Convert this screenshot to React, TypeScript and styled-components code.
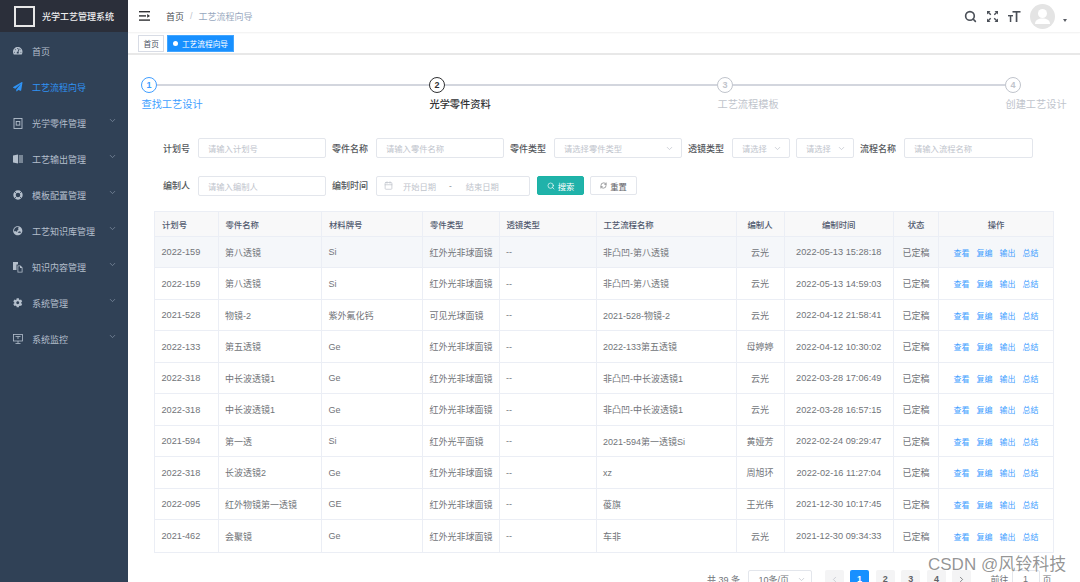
import React from "react";
import styled, { createGlobalStyle } from "styled-components";
import { FaTachometerAlt, FaPaperPlane, FaGlobeAsia, FaCog } from "react-icons/fa";
import { LuChevronDown, LuChevronLeft, LuChevronRight, LuSearch, LuRefreshCw, LuCalendar } from "react-icons/lu";

const Global = createGlobalStyle`
  html, body { margin: 0; padding: 0; height: 582px; overflow: hidden; background: #fff; }
  body { font-family: "Liberation Sans", "Noto Sans CJK SC", sans-serif; font-size: 9px; color: #606266; }
  * { box-sizing: border-box; }
`;

const Layout = styled.div`display: flex; width: 1080px; height: 582px; overflow: hidden; position: relative;`;
const Sidebar = styled.aside`width: 128px; flex: none; background: #304156; display: flex; flex-direction: column;`;
const Logo = styled.div`height: 32px; background: #2b2f3a; display: flex; align-items: center; padding-left: 14px; gap: 7px; color: #f0f0f0; font-size: 9px; font-weight: 500; white-space: nowrap;`;
const LogoBox = styled.div`width: 21px; height: 21px; border: 2px solid #e8e8e8; background: #2b2f3a;`;
const Menu = styled.nav`display: flex; flex-direction: column; padding-top: 1px;`;
const MenuItem = styled.div<{ $active?: boolean }>`
  height: 36px; display: flex; align-items: center; padding-left: 13px; position: relative;
  color: ${p => (p.$active ? "#2f93f5" : "#b4bfcc")}; font-size: 9px;
`;
const MenuIcon = styled.span`width: 19px; flex: none; display: flex; align-items: center; font-size: 9.5px;`;
const Caret = styled.span`position: absolute; right: 11px; top: 11px; display: flex; color: #7f8da0; font-size: 9px;`;

const Main = styled.main`flex: 1; min-width: 0; display: flex; flex-direction: column;`;
const Navbar = styled.header`height: 32px; flex: none; display: flex; align-items: center; padding: 0 13px 0 11px; box-shadow: 0 1px 2px rgba(0,21,41,.05);`;
const Crumb = styled.div`display: flex; align-items: center; margin-left: 16px; gap: 6px; font-size: 9px; color: #97a8be; flex: 1;`;
const CrumbHome = styled.span`color: #4a4d52;`;
const CrumbSep = styled.span`color: #c0c4cc;`;
const NavIcons = styled.div`display: flex; align-items: center; color: #4a4f57;`;
const NavIconSlot = styled.span`width: 22px; display: flex; align-items: center;`;
const Avatar = styled.div`width: 25px; height: 25px; border-radius: 50%; background: #e4e4e4; display: flex; align-items: center; justify-content: center; overflow: hidden;`;
const AvatarCaret = styled.span`width: 0; height: 0; border: 2.5px solid transparent; border-top: 3px solid #5a5e66; margin: 11px 0 0 8px;`;
const TagsBar = styled.div`height: 23px; flex: none; display: flex; align-items: center; gap: 3px; padding: 0 0 0 10px; border-bottom: 2px solid #e8e8e8; border-top: 1px solid #f4f4f4;`;
const Tag = styled.div<{ $active?: boolean }>`
  height: 17px; display: flex; align-items: center; padding: 0 4.5px; gap: 4px; font-size: 7.7px;
  border: 1px solid ${p => (p.$active ? "#42a5ff" : "#d8dce5")};
  background: ${p => (p.$active ? "#1890ff" : "#fff")};
  color: ${p => (p.$active ? "#fff" : "#495060")};
`;
const TagDot = styled.span`width: 5px; height: 5px; border-radius: 50%; background: #fff;`;

const Content = styled.section`flex: 1; min-height: 0; padding: 22px 26px 0 13px;`;
const Steps = styled.div`display: grid; grid-template-columns: 288px 288px 288px auto; height: 35px;`;
const Step = styled.div`display: flex; flex-direction: column; min-width: 0;`;
const StepHead = styled.div`display: flex; align-items: center; height: 16px;`;
const StepDot = styled.div<{ $s: string }>`
  width: 16px; height: 16px; border-radius: 50%; flex: none; display: flex; align-items: center; justify-content: center;
  font-size: 9px; font-weight: 700; background: #fff;
  border: 1.5px solid ${p => (p.$s === "done" ? "#409eff" : p.$s === "cur" ? "#303133" : "#c0c4cc")};
  color: ${p => (p.$s === "done" ? "#409eff" : p.$s === "cur" ? "#303133" : "#c0c4cc")};
`;
const StepLine = styled.div`flex: 1; height: 2px; background: #d3d6de;`;
const StepTitle = styled.div<{ $s: string }>`
  margin: 5px 0 0 0.5px; font-size: 10.2px; line-height: 14px; white-space: nowrap;
  font-weight: ${p => (p.$s === "cur" ? 500 : 400)};
  color: ${p => (p.$s === "done" ? "#409eff" : p.$s === "cur" ? "#303133" : "#c0c4cc")};
`;

const Form = styled.div`display: flex; flex-direction: column; gap: 17.5px; margin-top: 26px;`;
const FormRow = styled.div`display: flex; align-items: center; height: 20px;`;
const Label = styled.label<{ $w: number }>`width: ${p => p.$w}px; flex: none; text-align: right; padding-right: 8px; font-size: 9px; font-weight: 500; color: #54575c; white-space: nowrap;`;
const Field = styled.div<{ $w: number }>`
  width: ${p => p.$w}px; flex: none; height: 20px; border: 1px solid #e3e6ec; border-radius: 2px; display: flex; align-items: center;
  padding: 0 7px 0 9px; color: #c0c4cc; font-size: 8.3px; justify-content: space-between; white-space: nowrap; background: #fff;
`;
const DateSep = styled.span`color: #909399; margin-left: 3px;`;
const DateField = styled(Field)`justify-content: flex-start; padding-left: 7px;`;
const DateText = styled.span<{ $w: number }>`width: ${p => p.$w}px; flex: none; text-align: center;`;
const CalendarIcon = styled(LuCalendar)`flex: none;`;
const Btn = styled.button<{ $primary?: boolean }>`
  height: 19px; width: 47px; display: flex; align-items: center; justify-content: center; gap: 3px; border-radius: 2px; font: inherit; font-size: 8.3px; padding: 0;
  border: 1px solid ${p => (p.$primary ? "#1ab3a4" : "#e3e6ec")};
  background: ${p => (p.$primary ? "#20b2aa" : "#fff")};
  color: ${p => (p.$primary ? "#fff" : "#606266")};
`;
const Gap = styled.span<{ $w: number }>`width: ${p => p.$w}px; flex: none;`;

const cols = "63.5px 103.5px 101px 76.5px 97px 140px 48px 109.5px 45px 114px";
const Table = styled.div`margin: 15.5px 0 0 13px; width: 900px; border: 1px solid #ebeef5;`;
const Row = styled.div<{ $head?: boolean; $hi?: boolean }>`
  display: grid; grid-template-columns: ${cols}; height: ${p => (p.$head ? "24.5px" : "31.5px")};
  background: ${p => (p.$head ? "#f8f8f9" : p.$hi ? "#f5f7fa" : "#fff")};
  border-bottom: 1px solid #ebeef5;
  &:last-child { border-bottom: none; }
`;
const Cell = styled.div<{ $center?: boolean; $head?: boolean }>`
  display: flex; align-items: center; padding: ${p => (p.$head ? "0 7px" : "1px 6.5px 0")}; white-space: nowrap; overflow: hidden; border-right: 1px solid #ebeef5;
  justify-content: ${p => (p.$center ? "center" : "flex-start")};
  color: ${p => (p.$head ? "#515a6e" : "#717479")}; font-weight: ${p => (p.$head ? 500 : 400)};
  font-size: ${p => (p.$head ? "8.4px" : "9px")};
  &:last-child { border-right: none; }
`;
const Num = styled.span`font-size: 9.2px;`;
const Actions = styled.div`display: flex; gap: 7px; color: #409eff; font-size: 8px;`;

const Pager = styled.div`display: flex; align-items: center; margin-top: 17px; height: 19px; padding-left: 566px; white-space: nowrap; font-size: 9px; color: #717479;`;
const SizeSelect = styled.div`width: 64px; height: 19px; border: 1px solid #e3e6ec; border-radius: 2px; margin: 0 13px 0 7.5px; display: flex; align-items: center; justify-content: space-between; padding: 0 5px 0 10px;`;
const Pages = styled.div`display: flex; gap: 6.6px;`;
const PageBtn = styled.div<{ $active?: boolean; $disabled?: boolean }>`
  width: 19px; height: 19px; border-radius: 2px; display: flex; align-items: center; justify-content: center; font-weight: 700;
  background: ${p => (p.$active ? "#1890ff" : "#f4f4f5")};
  color: ${p => (p.$active ? "#fff" : p.$disabled ? "#c0c4cc" : "#606266")};
`;
const Goto = styled.div`display: flex; align-items: center; margin-left: 19px;`;
const GotoInput = styled.div`width: 28px; height: 19px; border: 1px solid #e3e6ec; border-radius: 2px; margin: 0 3px; display: flex; align-items: center; justify-content: center;`;
const Watermark = styled.div`position: absolute; left: 928px; top: 555px; font-size: 17px; line-height: 20px; color: rgba(70,70,70,.58); white-space: nowrap; text-shadow: 0 0 1px #fff;`;

const PartIcon = () => (
  <svg width="10" height="11" viewBox="0 0 10 11" fill="none" stroke="currentColor"><rect x="1" y=".5" width="8" height="10" strokeWidth=".9" /><rect x="3.2" y="3.5" width="3.6" height="3.6" strokeWidth=".9" /></svg>
);
const BookIcon = () => (
  <svg width="10" height="10" viewBox="0 0 10 10" fill="currentColor"><path d="M0 1.5 5 .5v9l-5-1z" /><path d="M5.8 1H10v8H5.8z" opacity=".55" /></svg>
);
const RingIcon = () => (
  <svg width="10" height="10" viewBox="0 0 10 10" fill="none" stroke="currentColor"><circle cx="5" cy="5" r="3.5" strokeWidth="2.4" /><path d="M1 1l2 2M9 1 7 3M1 9l2-2M9 9 7 7" stroke="#304156" strokeWidth=".8" /></svg>
);
const DocsIcon = () => (
  <svg width="10" height="11" viewBox="0 0 10 11" fill="currentColor"><path d="M0 0h5v2.5H3.5V8H0z" /><path d="M4.5 3.5h3L9.5 5.5v5h-5zM5.3 4.3v5.400h3.400V6H7V4.3z" /></svg>
);
const ScreenIcon = () => (
  <svg width="10" height="10" viewBox="0 0 10 10" fill="none" stroke="currentColor" strokeWidth=".8"><rect x=".5" y=".5" width="9" height="6.5" /><path d="M2.5 2.500h5M5 2.500V5M2.500 9.500h5M5 7v2.500" /></svg>
);

const menu: [React.ReactNode, string, boolean, boolean][] = [
  [<FaTachometerAlt />, "首页", false, false],
  [<FaPaperPlane />, "工艺流程向导", true, false],
  [<PartIcon />, "光学零件管理", false, true],
  [<BookIcon />, "工艺输出管理", false, true],
  [<RingIcon />, "模板配置管理", false, true],
  [<FaGlobeAsia />, "工艺知识库管理", false, true],
  [<DocsIcon />, "知识内容管理", false, true],
  [<FaCog />, "系统管理", false, true],
  [<ScreenIcon />, "系统监控", false, true],
];

const steps: [string, string][] = [["查找工艺设计", "done"], ["光学零件资料", "cur"], ["工艺流程模板", "wait"], ["创建工艺设计", "wait"]];
const heads = ["计划号", "零件名称", "材料牌号", "零件类型", "透镜类型", "工艺流程名称", "编制人", "编制时间", "状态", "操作"];
const rows = [
  ["2022-159", "第八透镜", "Si", "红外光非球面镜", "非凸凹-第八透镜", "云光", "2022-05-13 15:28:18"],
  ["2022-159", "第八透镜", "Si", "红外光非球面镜", "非凸凹-第八透镜", "云光", "2022-05-13 14:59:03"],
  ["2021-528", "物镜-2", "紫外氟化钙", "可见光球面镜", "2021-528-物镜-2", "云光", "2022-04-12 21:58:41"],
  ["2022-133", "第五透镜", "Ge", "红外光非球面镜", "2022-133第五透镜", "母婷婷", "2022-04-12 10:30:02"],
  ["2022-318", "中长波透镜1", "Ge", "红外光非球面镜", "非凸凹-中长波透镜1", "云光", "2022-03-28 17:06:49"],
  ["2022-318", "中长波透镜1", "Ge", "红外光非球面镜", "非凸凹-中长波透镜1", "云光", "2022-03-28 16:57:15"],
  ["2021-594", "第一透", "Si", "红外光平面镜", "2021-594第一透镜Si", "黄娅芳", "2022-02-24 09:29:47"],
  ["2022-318", "长波透镜2", "Ge", "红外光非球面镜", "xz", "周旭环", "2022-02-16 11:27:04"],
  ["2022-095", "红外物镜第一透镜", "GE", "红外光非球面镜", "葰旗", "王光伟", "2021-12-30 10:17:45"],
  ["2021-462", "会聚镜", "Ge", "红外光非球面镜", "车非", "云光", "2021-12-30 09:34:33"],
];

export default function App() {
  return (
    <Layout>
      <Global />
      <Sidebar>
        <Logo><LogoBox />光学工艺管理系统</Logo>
        <Menu>
          {menu.map(([icon, label, active, sub]) => (
            <MenuItem key={label} $active={active}>
              <MenuIcon>{icon}</MenuIcon>{label}
              {sub && <Caret><LuChevronDown /></Caret>}
            </MenuItem>
          ))}
        </Menu>
      </Sidebar>
      <Main>
        <Navbar>
          <svg width="11" height="10" viewBox="0 0 11 10" fill="#303133"><rect width="11" height="1.4" /><rect y="4.2" width="7" height="1.4" /><rect y="8.4" width="11" height="1.4" /><path d="M8.2 3v3.8L11 4.9z" /></svg>
          <Crumb><CrumbHome>首页</CrumbHome><CrumbSep>/</CrumbSep>工艺流程向导</Crumb>
          <NavIcons>
            <NavIconSlot><LuSearch size={13} strokeWidth={3} /></NavIconSlot>
            <NavIconSlot>
              <svg width="13" height="13" viewBox="0 0 13 13" fill="#4a4f57"><path d="M1 1h3.5L3.3 2.2l2 2-1 1-2-2L1 4.5zM12 1v3.5l-1.2-1.2-2 2-1-1 2-2L8.5 1zM1 12V8.5l1.2 1.2 2-2 1 1-2 2L4.5 12zM12 12H8.5l1.2-1.2-2-2 1-1 2 2L12 8.5z" /></svg>
            </NavIconSlot>
            <NavIconSlot>
              <svg width="13" height="13" viewBox="0 0 13 13" fill="#4a4f57"><rect x="4.5" y="1" width="8" height="1.6" /><rect x="7.7" y="1" width="1.7" height="11" /><rect x="0" y="5" width="5" height="1.4" /><rect x="1.8" y="5" width="1.5" height="7" /></svg>
            </NavIconSlot>
            <Avatar>
              <svg width="25" height="25" viewBox="0 0 25 25" fill="#fff"><circle cx="12.5" cy="9.5" r="4.5" /><path d="M5 20c0-4 3.5-5.500 7.500-5.500S20 16 20 20z" /></svg>
            </Avatar>
            <AvatarCaret />
          </NavIcons>
        </Navbar>
        <TagsBar>
          <Tag>首页</Tag>
          <Tag $active><TagDot />工艺流程向导</Tag>
        </TagsBar>
        <Content>
          <Steps>
            {steps.map(([t, s], i) => (
              <Step key={t}>
                <StepHead>
                  <StepDot $s={s}>{i + 1}</StepDot>
                  {i < 3 && <StepLine />}
                </StepHead>
                <StepTitle $s={s}>{t}</StepTitle>
              </Step>
            ))}
          </Steps>
          <Form>
            <FormRow>
              <Label $w={57}>计划号</Label><Field $w={128}>请输入计划号</Field>
              <Label $w={50}>零件名称</Label><Field $w={128}>请输入零件名称</Field>
              <Label $w={50}>零件类型</Label>
              <Field $w={128}>请选择零件类型<LuChevronDown size={9} /></Field>
              <Label $w={50}>透镜类型</Label>
              <Field $w={58}>请选择<LuChevronDown size={9} /></Field>
              <Gap $w={6} />
              <Field $w={58}>请选择<LuChevronDown size={9} /></Field>
              <Label $w={50}>流程名称</Label><Field $w={129}>请输入流程名称</Field>
            </FormRow>
            <FormRow>
              <Label $w={57}>编制人</Label><Field $w={128}>请输入编制人</Field>
              <Label $w={50}>编制时间</Label>
              <DateField $w={154}>
                <CalendarIcon size={9} />
                <DateText $w={53}>开始日期</DateText>
                <DateSep>-</DateSep>
                <DateText $w={61}>结束日期</DateText>
              </DateField>
              <Gap $w={7} />
              <Btn $primary><LuSearch size={8} />搜索</Btn>
              <Gap $w={6} />
              <Btn><LuRefreshCw size={7} />重置</Btn>
            </FormRow>
          </Form>
          <Table>
            <Row $head>
              {heads.map((h, i) => <Cell key={h} $head $center={i >= 6}>{h}</Cell>)}
            </Row>
            {rows.map((r, i) => (
              <Row key={i} $hi={i === 0}>
                <Cell><Num>{r[0]}</Num></Cell>
                <Cell>{r[1]}</Cell>
                <Cell>{r[2]}</Cell>
                <Cell>{r[3]}</Cell>
                <Cell>--</Cell>
                <Cell>{r[4]}</Cell>
                <Cell $center>{r[5]}</Cell>
                <Cell $center><Num>{r[6]}</Num></Cell>
                <Cell $center>已定稿</Cell>
                <Cell $center>
                  <Actions><span>查看</span><span>复编</span><span>输出</span><span>总结</span></Actions>
                </Cell>
              </Row>
            ))}
          </Table>
          <Pager>
            共 39 条
            <SizeSelect>10条/页<LuChevronDown size={9} color="#c0c4cc" /></SizeSelect>
            <Pages>
              <PageBtn $disabled><LuChevronLeft size={9} /></PageBtn>
              <PageBtn $active>1</PageBtn>
              <PageBtn>2</PageBtn>
              <PageBtn>3</PageBtn>
              <PageBtn>4</PageBtn>
              <PageBtn><LuChevronRight size={9} /></PageBtn>
            </Pages>
            <Goto>前往<GotoInput>1</GotoInput>页</Goto>
          </Pager>
        </Content>
      </Main>
      <Watermark>CSDN @风铃科技</Watermark>
    </Layout>
  );
}
